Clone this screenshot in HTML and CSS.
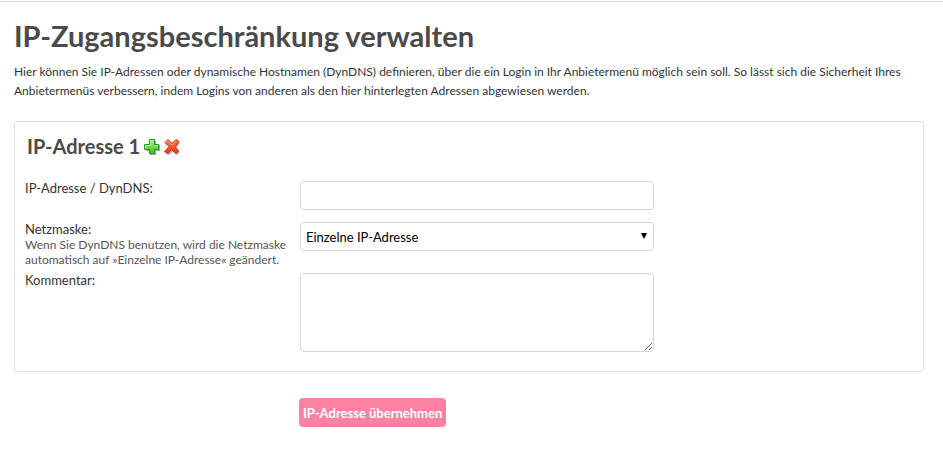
FILE: index.html
```
<!DOCTYPE html>
<html lang="de">
<head>
    <meta charset="UTF-8">
    <meta name="viewport" content="width=device-width, initial-scale=1.0">
    <title>IP-Zugangsbeschränkung verwalten</title>
    <link rel="stylesheet" href="styles.css">
</head>
<body>

    <main class="container">
        <h1>IP-Zugangsbeschränkung verwalten</h1>
        <p class="intro">Hier können Sie IP-Adressen oder dynamische Hostnamen (DynDNS) definieren, über die ein Login in Ihr Anbietermenü möglich sein soll. So lässt sich die Sicherheit Ihres Anbietermenüs verbessern, indem Logins von anderen als den hier hinterlegten Adressen abgewiesen werden.</p>

        <form>
            <section class="address-box">
                <div class="address-header">
                    <h2>IP-Adresse 1</h2>
                    <button type="button" class="icon-button" aria-label="Adresse hinzufügen">
                        <svg width="16" height="16" viewBox="0 0 16 16">
                            <defs>
                                <linearGradient id="green" x1="0" y1="0" x2="0" y2="1">
                                    <stop offset="0" stop-color="#a4ee7c"/>
                                    <stop offset="1" stop-color="#43bd28"/>
                                </linearGradient>
                            </defs>
                            <path d="M6 2h6v4h4v6h-4v4H6v-4H2V6h4z" fill="#777" opacity=".7"/>
                            <path d="M5.500.500h5v5h4v5h-4v4h-5v-4h-5v-5h5z" fill="url(#green)" stroke="#239b20" stroke-linejoin="round"/>
                            <path d="M6.500 6.500v-5h3M1.500 9.500v-3h5M10.500 6.500h3" fill="none" stroke="#c4f5a8"/>
                        </svg>
                    </button>
                    <button type="button" class="icon-button" aria-label="Adresse löschen">
                        <svg width="16" height="16" viewBox="0 0 16 16">
                            <defs>
                                <linearGradient id="red" x1="0" y1="0" x2="0" y2="1">
                                    <stop offset="0" stop-color="#ff7f58"/>
                                    <stop offset="1" stop-color="#f0340f"/>
                                </linearGradient>
                            </defs>
                            <path d="M5 2l4 4 4-4 3 2-4 5 4 4-3 3-4-4-4 4-3-2 4-5-4-5z" fill="#777" opacity=".7"/>
                            <path d="M4 .500l4 4 4-4 3 2-4 5 3.500 4-2.500 3-4.500-4-4 4-3-2 4.500-5-4-4z" fill="url(#red)" stroke="#d42c12" stroke-linejoin="round"/>
                            <path d="M2 3.500l2-1.500 4 4 4-4" fill="none" stroke="#ffa084"/>
                        </svg>
                    </button>
                </div>

                <div class="form-row">
                    <label for="address">IP-Adresse / DynDNS:</label>
                    <input type="text" class="field" id="address">
                </div>
                <div class="form-row">
                    <div class="label-group">
                        <label for="netmask">Netzmaske:</label>
                        <span class="hint">Wenn Sie DynDNS benutzen, wird die Netzmaske automatisch auf »Einzelne IP-Adresse« geändert.</span>
                    </div>
                    <div class="select-wrap">
                        <select class="field" id="netmask">
                            <option>Einzelne IP-Adresse</option>
                        </select>
                        <svg class="arrow" width="6" height="6" viewBox="0 0 6 6"><path d="M0 0h6L3 6z"/></svg>
                    </div>
                </div>
                <div class="form-row">
                    <label for="comment">Kommentar:</label>
                    <textarea class="field" id="comment"></textarea>
                </div>
            </section>

            <button type="submit" class="submit-button">IP-Adresse übernehmen</button>
        </form>
    </main>

</body>
</html>
```
FILE: styles.css
```
* {
    box-sizing: border-box;
}
body {
    margin: 0;
    padding-top: 1px;
    font-family: Lato, sans-serif;
    font-size: 12px;
    color: #333;
    background-color: #fff;
}
.container {
    padding: 16px 19px 32px 14px;
    border-top: 1px solid #e0e0e0;
}
h1 {
    margin: 0 0 8px;
    font-size: 29px;
    line-height: 36px;
    color: #4a4a4a;
}
.intro {
    margin: 0 0 21px;
    line-height: 19px;
}
.address-box {
    margin-bottom: 26px;
    padding: 12px 10px 7px;
    border: 1px solid #e0e0e0;
    border-radius: 3px;
}
.address-header {
    display: flex;
    align-items: center;
    gap: 4px;
    margin-bottom: 23px;
    padding-left: 2px;
}
h2 {
    margin: 0;
    font-size: 20px;
    line-height: 24px;
    color: #4a4a4a;
}
.icon-button {
    display: flex;
    padding: 2px 0 0;
    border: none;
    background: none;
    cursor: pointer;
}
.form-row {
    display: grid;
    grid-template-columns: 275px minmax(0, 354px);
    align-items: start;
    margin-bottom: 6px;
    font-size: 13px;
    line-height: 15px;
}
.label-group {
    display: flex;
    flex-direction: column;
}
.hint {
    padding-right: 4px;
    font-size: 12px;
    color: #555;
}
.field {
    display: block;
    width: 100%;
    height: 29px;
    margin: 0 0 6px;
    padding: 0 5px;
    border: 1px solid #d8d8d8;
    border-radius: 4px;
    background-color: #fff;
    font-family: inherit;
    font-size: 13px;
    color: #000;
}
textarea.field {
    height: 79px;
    resize: both;
}
.select-wrap {
    position: relative;
}
select.field {
    appearance: none;
}
.arrow {
    position: absolute;
    top: 11px;
    right: 7px;
    pointer-events: none;
}
.submit-button {
    display: block;
    height: 29px;
    margin-left: 285px;
    padding: 0 4px;
    border: none;
    border-radius: 4px;
    background-color: #fd82a2;
    font-family: inherit;
    font-size: 13px;
    font-weight: bold;
    color: #fff;
    cursor: pointer;
}
```
